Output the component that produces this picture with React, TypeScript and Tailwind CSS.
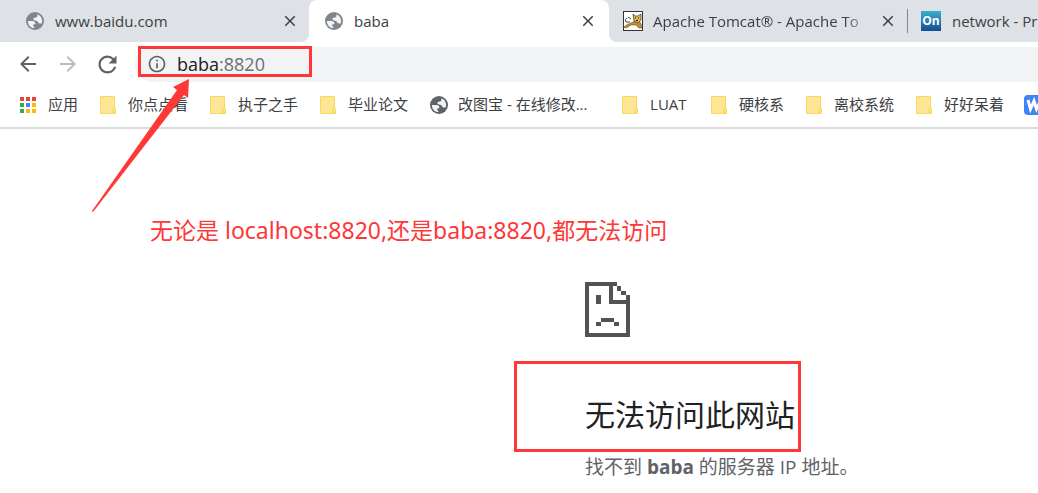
import type { ReactNode } from 'react';
import { MdArrowBack, MdArrowForward, MdClose, MdInfoOutline, MdRefresh } from 'react-icons/md';

function Globe({ className }: { className: string }) {
  return (
    <svg viewBox="0 0 18 18" className={`size-[18px] shrink-0 ${className}`} aria-hidden="true">
      <circle cx="9" cy="9" r="9" fill="currentColor" />
      <path
        fill="#f1f3f4"
        d="M1.900 9H5.500C7.500 9 9.300 9.500 9.400 11.200 9.400 12.300 8.600 12.500 7.200 12.500V14C7.200 14.600 8.300 14.400 8.300 15.200V16.100C4.600 15.900 1.900 12.900 1.900 9zM11.300 2.300C14.100 3.200 16.100 5.800 16.100 8.900 16.100 9.900 15.900 10.700 15.600 11.400H13.600C12.600 11.400 12.300 10.500 11.600 9.600 10.900 8.700 9.300 9 8.200 8.300 7.200 7.700 7.300 6.300 8.300 5.700L10.100 5.400C11.300 5.200 11.800 4.300 11.300 2.300z"
      />
    </svg>
  );
}

function Folder() {
  return (
    <svg viewBox="0 0 16 18" className="h-[18px] w-4 shrink-0" aria-hidden="true">
      <path d="M0 1Q0 0 1 0H14Q15 0 15 1V11.500L16 13V17Q16 18 15 18H1Q0 18 0 17Z" fill="#f7d861" />
      <path d="M1 1H14V11L12 13V17H1Z" fill="#ffe694" />
      <path d="M13 16V12.500Q13 12 14 12T15 13V16Q14 17 13 16Z" fill="#ffe27a" />
    </svg>
  );
}

function Apps() {
  const colors = ['#ea4335', '#ea4335', '#ea4335', '#34a853', '#4285f4', '#fbbc05', '#34a853', '#fbbc05', '#fbbc05'];
  return (
    <svg viewBox="0 0 16 16" className="size-4 shrink-0" aria-hidden="true">
      {colors.map((color, i) => (
        <rect key={i} x={(i % 3) * 6} y={Math.floor(i / 3) * 6} width="4" height="4" fill={color} />
      ))}
    </svg>
  );
}

function Tomcat() {
  return (
    <svg viewBox="0 0 20 20" className="size-5 shrink-0" aria-hidden="true">
      <rect x=".5" y=".5" width="19" height="19" fill="#fff" stroke="#333" />
      <path d="M7 11L3 11Q1 8 4 7M5 6L8 8" fill="none" stroke="#444" />
      <path d="M1 16Q4 13 8 12L12 10L17 11L19 15V17H16L13 14L8 14L5 16L2 17Z" fill="#c98a2c" stroke="#5a4318" strokeWidth=".5" />
      <path d="M10 3L12 5H15L18 3V9L15 12L11 10Z" fill="#dcb45c" stroke="#4a3a1a" strokeWidth=".7" />
      <path d="M12 7H13M15 7H16M13 9.500H15" stroke="#222" />
    </svg>
  );
}

function CloseButton({ title }: { title: string }) {
  return (
    <button type="button" aria-label={`Close ${title}`} className="shrink-0">
      <MdClose className="size-[18px] text-[#3c4043]" />
    </button>
  );
}

function Bookmark({ icon, children, className = 'gap-3' }: { icon: ReactNode; children: ReactNode; className?: string }) {
  return (
    <a href="#" className={`flex shrink-0 items-center ${className}`}>
      {icon}
      <span className="whitespace-nowrap">{children}</span>
    </a>
  );
}

export default function App() {
  return (
    <div className="relative min-h-screen overflow-hidden bg-white font-['Open_Sans','Noto_Sans_CJK_SC',sans-serif] text-[#3c4043]">
      <header>
        <nav aria-label="Tabs" className="flex h-[42px] text-[15px]">
          <div className="flex w-[309px] shrink-0 items-center rounded-br-lg bg-[#dee1e6] pr-2.5 pl-[26px]">
            <Globe className="text-[#80868b]" />
            <span className="ml-[11px] flex-1">www.baidu.com</span>
            <CloseButton title="www.baidu.com" />
          </div>
          <div className="w-[300px] shrink-0 bg-linear-to-b from-[#dee1e6] from-50% to-white to-50%">
            <div className="flex h-full items-center rounded-t-lg bg-white pr-3 pl-4">
              <Globe className="text-[#80868b]" />
              <span className="ml-[11px] flex-1">baba</span>
              <CloseButton title="baba" />
            </div>
          </div>
          <div className="flex min-w-0 flex-1 items-center rounded-bl-lg bg-[#dee1e6] pl-3.5">
            <Tomcat />
            <span className="ml-2.5 w-[218px] shrink-0 overflow-hidden mask-r-from-88% whitespace-nowrap">
              Apache Tomcat® - Apache To
            </span>
            <span className="ml-2 flex"><CloseButton title="Apache Tomcat" /></span>
            <span className="ml-2.5 h-6 w-px shrink-0 bg-[#80868b]" />
            <svg viewBox="0 0 20 20" className="ml-[13px] size-5 shrink-0" aria-hidden="true">
              <defs>
                <linearGradient id="on" x2="0" y2="1">
                  <stop stopColor="#38b1cc" />
                  <stop offset="1" stopColor="#174b91" />
                </linearGradient>
              </defs>
              <rect width="20" height="20" fill="url(#on)" />
              <text x="10" y="14" textAnchor="middle" fontSize="12" fontWeight="700" fill="#fff">On</text>
            </svg>
            <span className="ml-[11px] min-w-0 flex-1 overflow-hidden whitespace-nowrap">network - Pr</span>
          </div>
        </nav>

        <div className="flex h-11 items-center pl-4">
          <button type="button" aria-label="Back"><MdArrowBack className="size-6 text-[#5f6368]" /></button>
          <button type="button" aria-label="Forward" className="ml-4"><MdArrowForward className="size-6 text-[#babcbe]" /></button>
          <button type="button" aria-label="Reload" className="ml-3.5"><MdRefresh className="size-[27px] text-[#5f6368]" /></button>
          <div className="ml-3.5 flex h-[35px] flex-1 items-center rounded-l-full bg-[#f1f3f4] pl-3">
            <MdInfoOutline className="size-5 text-[#5f6368]" />
            <div role="textbox" aria-label="Address" tabIndex={0} className="ml-2.5 text-lg text-[#6b7074]">
              <span className="text-[#202124]">baba</span>:8820
            </div>
          </div>
        </div>

        <nav aria-label="Bookmarks" className="flex h-[43px] items-center gap-[22px] overflow-hidden border-b-2 border-[#dadce0] pb-1 pl-5 text-[15px]">
          <Bookmark icon={<Apps />}>应用</Bookmark>
          <Bookmark icon={<Folder />}>你点点看</Bookmark>
          <Bookmark icon={<Folder />}>执子之手</Bookmark>
          <Bookmark icon={<Folder />}>毕业论文</Bookmark>
          <Bookmark icon={<Globe className="text-[#5f6368]" />} className="w-[170px] gap-2.5">改图宝 - 在线修改...</Bookmark>
          <Bookmark icon={<Folder />} className="w-[67px] gap-3">LUAT</Bookmark>
          <Bookmark icon={<Folder />}>硬核系</Bookmark>
          <Bookmark icon={<Folder />}>离校系统</Bookmark>
          <Bookmark icon={<Folder />}>好好呆着</Bookmark>
          <a href="#" aria-label="W" className="-ml-0.5 shrink-0">
            <svg viewBox="0 0 20 20" className="size-5" aria-hidden="true">
              <rect width="20" height="20" rx="4" fill="#3f83f8" />
              <path d="M4 5L6.500 14L10 6L12.500 14L17 5" fill="none" stroke="#fff" strokeWidth="3" />
            </svg>
          </a>
        </nav>
      </header>

      <main className="pt-[153px] pl-[585px]">
        <svg viewBox="0 0 46 55" className="h-[55px] w-[46px]" fill="#535353" aria-hidden="true">
          <path fillRule="evenodd" d="M0 0H32V4H28V18H41V13H45V55H0ZM4 4V51H41V22H24V4Z" />
          <path d="M32 4H36V9H32ZM36 9H41V13H36ZM11 13H16V22H11ZM16 36H29V40H16ZM11 40H16V44H11ZM29 40H34V44H29Z" />
        </svg>
        <h1 className="mt-14 text-[30px] leading-[44px] whitespace-nowrap text-[#202124]">无法访问此网站</h1>
        <p className="mt-4 text-[19px] leading-7 whitespace-nowrap text-[#5f6368]">
          找不到 <strong>baba</strong> 的服务器 IP 地址。
        </p>
      </main>

      <p className="absolute top-[214px] left-[150px] font-['Noto_Sans','Noto_Sans_CJK_SC',sans-serif] text-[23px] leading-8 whitespace-nowrap text-[#fe3737]">
        无论是 localhost:8820,还是baba:8820,都无法访问
      </p>
      <div className="absolute top-[46px] left-[138px] h-[31px] w-[174px] border-3 border-[#fe3737]" />
      <div className="absolute top-[361px] left-[514px] h-[91px] w-[287px] border-3 border-[#fe3737]" />
      <svg viewBox="0 0 100 136" className="absolute top-[78px] left-[91px] h-[136px] w-[100px]" fill="#fe3737" aria-hidden="true">
        <path d="M98 1L97 20L93 17L2 134L1 133L86 12L82 9Z" />
      </svg>
    </div>
  );
}
